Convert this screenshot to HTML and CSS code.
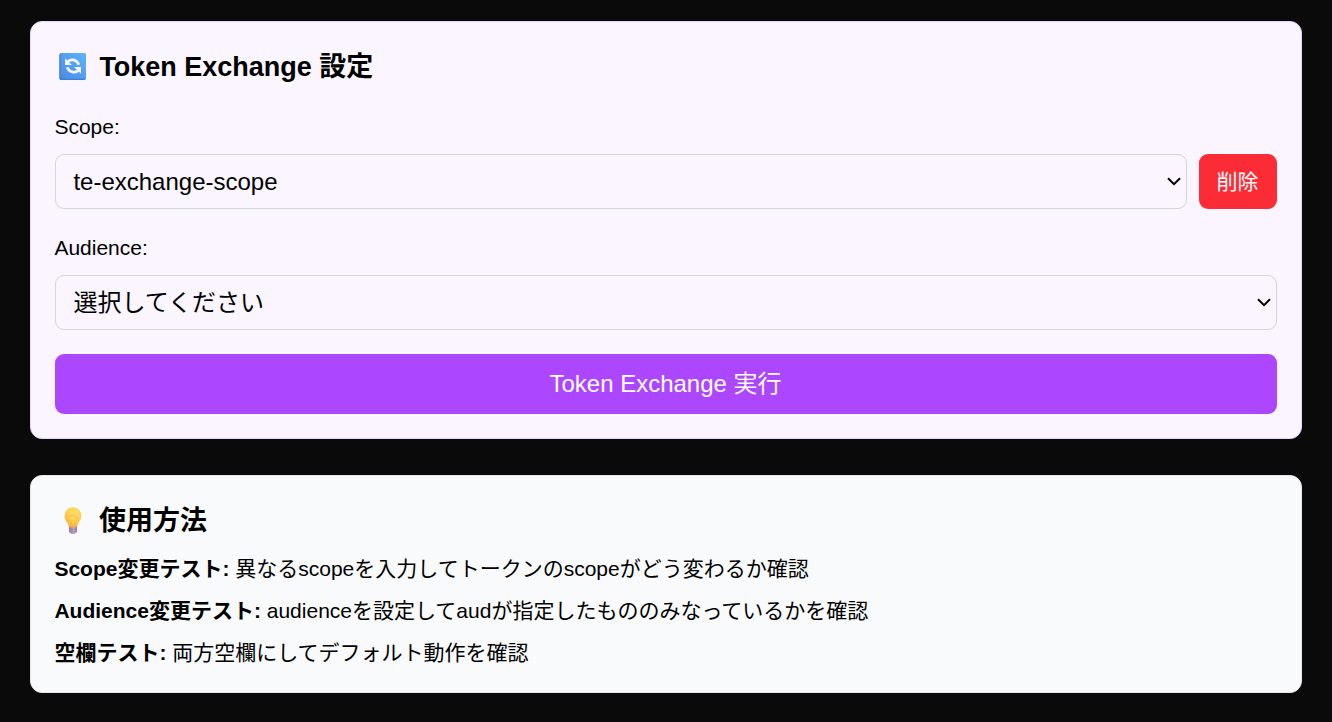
FILE: index.html
```html
<!DOCTYPE html>
<html lang="ja">
<head>
<meta charset="utf-8">
<title>Token Exchange</title>
<link rel="stylesheet" href="styles.css">
</head>
<body>
<main class="page">
  <section class="card card-exchange">
    <h2 class="title">
      <svg class="title-icon" viewBox="0 0 36 36" aria-hidden="true">
        <defs>
          <linearGradient id="blue" x1="1" y1="0" x2="0" y2="1">
            <stop offset="0" stop-color="#5db5fb"/>
            <stop offset="1" stop-color="#4a8ae6"/>
          </linearGradient>
        </defs>
        <rect x="4.2" y="4" width="26.8" height="27" rx="2.6" fill="#3f7fd0"/>
        <rect x="5.4" y="4" width="25.6" height="25.8" rx="2.4" fill="url(#blue)"/>
        <g fill="none" stroke="#f5f4ff" stroke-width="2.8">
          <path d="M12 13.8C14.6 9.6 21.4 9.8 23.8 15.8"/>
          <path d="M24 20.2C21.4 24.4 14.6 24.2 12.2 18.2"/>
        </g>
        <path d="M10 9.2V16H17Z" fill="#f5f4ff"/>
        <path d="M26 24.8V18H19Z" fill="#f5f4ff"/>
      </svg>
      <span>Token Exchange 設定</span>
    </h2>
    <div class="field">
      <div class="label">Scope:</div>
      <div class="row">
        <div class="select">
          <span>te-exchange-scope</span>
          <svg class="chevron" viewBox="0 0 14 9" aria-hidden="true"><path d="M1 1.2L7 7.2L13 1.2"/></svg>
        </div>
        <button class="delete">削除</button>
      </div>
    </div>
    <div class="field">
      <div class="label">Audience:</div>
      <div class="select">
        <span>選択してください</span>
        <svg class="chevron" viewBox="0 0 14 9" aria-hidden="true"><path d="M1 1.2L7 7.2L13 1.2"/></svg>
      </div>
    </div>
    <button class="submit">Token Exchange 実行</button>
  </section>
  <section class="card card-usage">
    <h2 class="title title-usage">
      <svg class="title-icon" viewBox="0 1 36 36" aria-hidden="true">
        <defs>
          <radialGradient id="bulb" cx=".62" cy=".3" r=".75">
            <stop offset="0" stop-color="#ffdf69"/>
            <stop offset=".6" stop-color="#ffcf50"/>
            <stop offset="1" stop-color="#f3a83c"/>
          </radialGradient>
          <linearGradient id="base" x1="0" y1="0" x2="1" y2="0">
            <stop offset="0" stop-color="#8e789c"/>
            <stop offset=".6" stop-color="#c0adc9"/>
            <stop offset="1" stop-color="#98789f"/>
          </linearGradient>
        </defs>
        <path d="M14 24h8v5.6q-.2 1.2-1.6 1.4l-.6.9h-3.6l-.6-.9q-1.4-.2-1.6-1.4z" fill="url(#base)"/>
        <path d="M14 27.4h8M14.2 29.5h7.6" stroke="#8d789e" stroke-width=".5"/>
        <path d="M18 5.2a8.5 8.5 0 0 1 8.5 8.5c0 3.7-2.3 5.8-3.5 8.4-.6 1.3-.5 3.2-1.8 3.2h-6.4c-1.3 0-1.2-1.9-1.8-3.2-1.2-2.6-3.5-4.7-3.5-8.4A8.5 8.5 0 0 1 18 5.2z" fill="url(#bulb)"/>
        <path d="M16.4 25v-4.7c-2.1-.8-2.9-2-2.9-3.5 0-2.1 1.8-3.6 4.5-3.6s4.5 1.5 4.5 3.6c0 1.5-.8 2.7-2.9 3.5V25" fill="none" stroke="#f8b43e" stroke-width=".9"/>
      </svg>
      <span>使用方法</span>
    </h2>
    <div class="notes">
      <p><strong>Scope変更テスト:</strong> 異なるscopeを入力してトークンのscopeがどう変わるか確認</p>
      <p><strong>Audience変更テスト:</strong> audienceを設定してaudが指定したもののみなっているかを確認</p>
      <p><strong>空欄テスト:</strong> 両方空欄にしてデフォルト動作を確認</p>
    </div>
  </section>
</main>
</body>
</html>
```
FILE: styles.css
```css
* {
  box-sizing: border-box;
}

body {
  margin: 0;
  background: #0a0a0a;
  color: #000;
  font-family: "Liberation Sans", "Noto Sans CJK JP", sans-serif;
}

.page {
  display: flex;
  flex-direction: column;
  gap: 36px;
  padding: 21px 30px 29px;
}

.card {
  border: 1px solid;
  border-radius: 12px;
  padding: 24px;
}

.card-exchange {
  display: flex;
  flex-direction: column;
  gap: 24px;
  background: #faf5ff;
  border-color: #e9d4ff;
}

.card-usage {
  background: #f9fafb;
  border-color: #e5e7eb;
}

.title {
  display: flex;
  align-items: center;
  height: 42px;
  margin: 0;
  font-size: 27px;
  line-height: 42px;
  font-weight: 700;
  letter-spacing: -0.02px;
  white-space: nowrap;
}

.title-usage {
  margin-bottom: 12px;
}

.title-icon {
  flex: none;
  width: 36px;
  height: 36px;
  margin-right: 8.4px;
}

.title-usage .title-icon {
  margin-right: 8px;
}

.field {
  display: flex;
  flex-direction: column;
  gap: 12px;
}

.label {
  font-size: 21px;
  line-height: 30px;
  text-indent: -0.6px;
}

.row {
  display: flex;
  gap: 12px;
}

.select {
  display: flex;
  flex: 1;
  align-items: center;
  justify-content: space-between;
  height: 55px;
  min-height: 55px;
  padding: 0 5px 0 17.4px;
  border: 1px solid #d1d5dc;
  border-radius: 9px;
  font-size: 24px;
  line-height: 36px;
}

.chevron {
  width: 14px;
  height: 9px;
  fill: none;
  stroke: #000;
  stroke-width: 2;
}

.delete,
.submit {
  border: 0;
  padding: 0 1px 0 0;
  border-radius: 9px;
  color: #fff;
  font-family: inherit;
}

.delete {
  width: 78px;
  background: #fb2c36;
  font-size: 21px;
  line-height: 30px;
}

.submit {
  height: 60px;
  background: #ad46ff;
  font-size: 24px;
  line-height: 36px;
}

.notes {
  display: flex;
  flex-direction: column;
  gap: 12px;
  font-size: 21px;
  line-height: 30px;
}

.notes p {
  height: 30px;
  margin: 0;
  text-indent: -0.6px;
  white-space: nowrap;
}
```
